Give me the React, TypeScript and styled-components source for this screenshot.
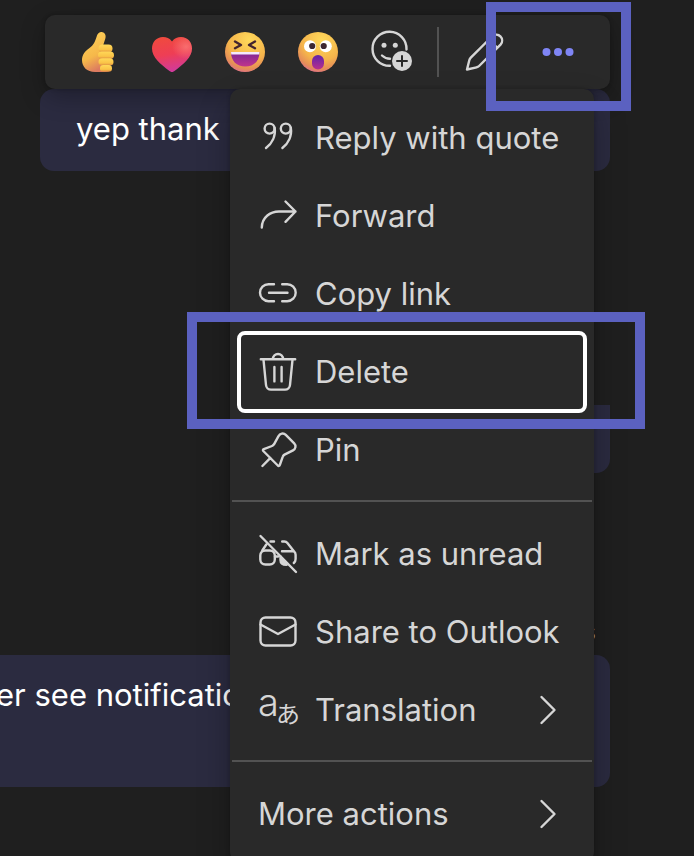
import React from "react";
import styled, { createGlobalStyle } from "styled-components";

const GlobalStyle = createGlobalStyle`
  *, *::before, *::after { box-sizing: border-box; }
  body { margin: 0; background: #1f1f1f; }
  button { font: inherit; color: inherit; background: none; border: 0; padding: 0; cursor: pointer; }
`;

const Stage = styled.div`
  position: relative;
  height: 100vh;
  min-height: 400px;
  overflow: hidden;
  background: #1f1f1f;
  color: #d6d6d6;
  font-family: Inter, "Liberation Sans", sans-serif;
  font-size: 31px;
  line-height: 40px;
`;

const Thread = styled.main`
  display: flex;
  flex-direction: column;
  align-items: stretch;
  padding: 89px 84px 0 0;
`;

const Bubble = styled.article<{ $start: string; $after: number; $height: number; $radius?: string }>`
  margin: 0 0 ${(p) => p.$after}px ${(p) => p.$start};
  min-height: ${(p) => p.$height}px;
  padding: 20px 36px;
  border-radius: ${(p) => p.$radius ?? "14px"};
  background: #2b2b40;
  color: #ffffff;
  white-space: nowrap;
`;

const Status = styled.span`
  align-self: flex-end;
  margin: 0 14px 3px 0;
  font-size: 24px;
  color: #adadad;
`;

const Toolbar = styled.div`
  position: absolute;
  top: 15px;
  right: 84px;
  display: flex;
  align-items: center;
  height: 74px;
  padding: 0 16px 0 17px;
  border-radius: 10px;
  background: #292929;
  box-shadow: 0 0 4px rgba(0, 0, 0, 0.24), 0 8px 24px rgba(0, 0, 0, 0.28);
`;

const ToolButton = styled.button<{ $active?: boolean }>`
  display: grid;
  place-items: center;
  width: 73px;
  height: 74px;
  color: ${(p) => (p.$active ? "#7f85f5" : "#d6d6d6")};
`;

const ToolDivider = styled.span`
  width: 2px;
  height: 50px;
  margin: 0 9px 0 10px;
  background: #525252;
`;

const Menu = styled.div`
  position: absolute;
  top: 89px;
  right: 100px;
  width: 364px;
  padding: 10px 9px 9px;
  border-radius: 10px;
  background: #292929;
  box-shadow: 0 0 4px rgba(0, 0, 0, 0.24), 0 16px 32px rgba(0, 0, 0, 0.28);
`;

const MenuRow = styled.button<{ $focused?: boolean }>`
  display: flex;
  align-items: center;
  gap: 17px;
  width: 100%;
  height: 78px;
  padding: 0 29px 0 19px;
  border-radius: 6px;
  text-align: left;
  white-space: nowrap;
  outline: ${(p) => (p.$focused ? "4px solid #ffffff" : "none")};
  outline-offset: -2px;
`;

const RowLabel = styled.span`
  flex: 1;
`;

const MenuDivider = styled.hr`
  height: 2px;
  margin: 11px -7px 13px;
  border: 0;
  background: #525252;
`;

const Highlight = styled.div<{ $top: number; $right: number; $width: number; $height: number }>`
  position: absolute;
  top: ${(p) => p.$top}px;
  right: ${(p) => p.$right}px;
  width: ${(p) => p.$width}px;
  height: ${(p) => p.$height}px;
  border: 10px solid #5b61c0;
  pointer-events: none;
`;

const LineIcon = styled.svg`
  display: block;
  flex: none;
  fill: none;
  stroke: currentColor;
  stroke-width: 2.4;
  stroke-linecap: round;
  stroke-linejoin: round;
  overflow: visible;
`;

const Emoji = styled.svg`
  display: block;
  width: 40px;
  height: 40px;
`;

const Icon = ({ children }: { children: React.ReactNode }) => (
  <LineIcon width="40" height="40" viewBox="0 0 40 40" aria-hidden="true">
    {children}
  </LineIcon>
);

const Chevron = () => (
  <LineIcon width="16" height="28" viewBox="0 0 16 28" aria-hidden="true">
    <path d="M1.5 1 14.5 14 1.5 27" />
  </LineIcon>
);

const icons = {
  quote: (
    <Icon>
      <circle cx="11.6" cy="10.6" r="5" />
      <path d="M16.6 9.8C18 18 14 25.5 8 30" />
      <circle cx="27.8" cy="10.6" r="5" />
      <path d="M32.8 9.8C34.2 18 30.2 25.5 24.4 30" />
    </Icon>
  ),
  forward: (
    <Icon>
      <path d="M3.8 31.5C4 21.5 12 15.5 21 15.5H37.5M27.5 5.5l10 10-10 10.3" />
    </Icon>
  ),
  link: (
    <Icon>
      <path d="M16 10.2h-5.5a8.5 8.5 0 0 0 0 17H16M24.2 10.2h5a8.5 8.5 0 0 1 0 17h-5M11 18.7h18.5" />
    </Icon>
  ),
  trash: (
    <Icon>
      <path d="M2.8 7.3h34.4M15 7a5 5 0 0 1 10 0M5.5 7.8 8 33a5 5 0 0 0 5 4.6h14a5 5 0 0 0 5-4.6l2.5-25.2M16.4 15v14.4M23.6 15v14.4" />
    </Icon>
  ),
  pin: (
    <Icon>
      <path d="M20.5 6.2C21.8 3.4 25.5 2.6 27.8 4.9l8.4 8.4c2.2 2.2 1.5 5.7-1.2 7.1l-8.5 4.200c-1 .6-1.500 1.200-1.800 2.200L21.800 35c-.3 1-1.300 1.300-2 .5L5.300 21c-.7-.8-.3-1.600.5-1.900L14 16c1-.4 1.500-1 2-1.700ZM12.400 27.800 4.400 36" />
    </Icon>
  ),
  unread: (
    <Icon>
      <rect x="2.3" y="16.5" width="14.500" height="14" rx="5" />
      <path d="M2.500 2l35.500 36M4.300 16.500l4-6M12.500 7.500H16M24.200 7.500h2.200c1.400 0 2.200.5 3 1.500L36.500 18M24 17.200h11.800c1.200.8 1.800 2 1.800 3.500V25c0 1.800-.6 3-1.800 4" />
      <path d="M17 22.500h3M22.500 22.500V26c0 3.200 2.400 4.800 6 4.800" />
      <path d="M23.200 23.500l6.500 6.500c-3.800.4-6-1-6.500-6.500Z" fill="currentColor" />
    </Icon>
  ),
  mail: (
    <Icon>
      <rect x="2.500" y="5.500" width="35" height="28" rx="5" />
      <path d="M2.500 12.500L20 22l17.500-9.500" />
    </Icon>
  ),
  translate: (
    <Icon>
      <g fill="currentColor" stroke="none">
        <text x="0" y="26" fontSize="38" fontWeight="300">a</text>
        <text x="18" y="33" fontSize="24" fontWeight="400" fontFamily="'Noto Sans CJK JP', sans-serif">あ</text>
      </g>
    </Icon>
  ),
};

const ThumbsUp = () => (
  <Emoji viewBox="0 0 40 40" aria-hidden="true">
    <defs>
      <linearGradient id="thumb-skin" x1="0" y1="0" x2="0.4" y2="1">
        <stop offset="0" stopColor="#ffd45a" />
        <stop offset="0.65" stopColor="#f6b84a" />
        <stop offset="1" stopColor="#dc7a60" />
      </linearGradient>
      <linearGradient id="thumb-finger" x1="0" y1="0" x2="0" y2="1">
        <stop offset="0" stopColor="#ffd858" />
        <stop offset="0.65" stopColor="#fac347" />
        <stop offset="1" stopColor="#dc8a43" />
      </linearGradient>
    </defs>
    <path d="M18 3.500c1.200-3.300 4.200-4.200 6.400-3 2.300 1.200 2.600 3.800 1.800 6.400l-2.600 8 3.800 2.500L32 37c-1 2-3 3-6 3H16C8 40 3 35 3 28c0-5 3-9 7.500-12C15 12.800 16.500 8.500 18 3.500Z" fill="url(#thumb-skin)" />
    <rect x="19.500" y="12.500" width="14" height="8" rx="4" fill="url(#thumb-finger)" />
    <rect x="19" y="19.500" width="16" height="7.500" rx="3.700" fill="url(#thumb-finger)" />
    <rect x="19.500" y="26.300" width="15" height="7.300" rx="3.600" fill="url(#thumb-finger)" />
    <rect x="21" y="33" width="12" height="6.700" rx="3.300" fill="url(#thumb-finger)" />
  </Emoji>
);

const Heart = () => (
  <Emoji viewBox="0 0 40 40" aria-hidden="true">
    <defs>
      <linearGradient id="heart-fill" x1="0.3" y1="0" x2="0.5" y2="1">
        <stop offset="0" stopColor="#f04a3e" />
        <stop offset="0.5" stopColor="#ee3e55" />
        <stop offset="1" stopColor="#d03a9f" />
      </linearGradient>
      <radialGradient id="heart-shine" cx="0.85" cy="0.28" r="0.35">
        <stop offset="0" stopColor="#ff8b82" stopOpacity="0.6" />
        <stop offset="1" stopColor="#ff8b82" stopOpacity="0" />
      </radialGradient>
    </defs>
    {["url(#heart-fill)", "url(#heart-shine)"].map((fill) => (
      <path key={fill} d="M20 9.500C17.500 6 14.500 5 11 5 4.500 5 0 10 0 16.500c0 9 8.500 15.500 17.500 22.600 1.700 1.300 3.300 1.300 5 0C31.500 32 40 25.500 40 16.500 40 10 35.500 5 29 5c-3.500 0-6.500 1-9 4.500Z" fill={fill} />
    ))}
  </Emoji>
);

const FaceGradient = ({ id }: { id: string }) => (
  <radialGradient id={id} cx="0.6" cy="0.2" r="0.85">
    <stop offset="0" stopColor="#ffd95a" />
    <stop offset="0.6" stopColor="#f5b44b" />
    <stop offset="0.85" stopColor="#e58d58" />
    <stop offset="1" stopColor="#df6c91" />
  </radialGradient>
);

const Laugh = () => (
  <Emoji viewBox="0 0 40 40" aria-hidden="true">
    <defs>
      <FaceGradient id="laugh-face" />
      <linearGradient id="laugh-mouth" x1="0" y1="0" x2="0" y2="1">
        <stop offset="0" stopColor="#7b2596" />
        <stop offset="1" stopColor="#c0358b" />
      </linearGradient>
    </defs>
    <circle cx="20" cy="20" r="20" fill="url(#laugh-face)" />
    <path d="M10 9.500l6 3.500-6 3.200M30 9.500L24 13l6 3.200" fill="none" stroke="#44242f" strokeWidth="2.400" strokeLinecap="round" strokeLinejoin="round" />
    <path d="M6 20h28.500c0 9-5.500 14.500-14.200 14.500S6 29 6 20Z" fill="url(#laugh-mouth)" />
    <path d="M6 20h28.500l-.3 2.500H6.300Z" fill="#f4e8fb" />
  </Emoji>
);

const Shocked = () => (
  <Emoji viewBox="0 0 40 40" aria-hidden="true">
    <defs>
      <FaceGradient id="shock-face" />
      <linearGradient id="shock-mouth" x1="0" y1="0" x2="0" y2="1">
        <stop offset="0" stopColor="#6224aa" />
        <stop offset="1" stopColor="#b8308c" />
      </linearGradient>
    </defs>
    <circle cx="20" cy="20" r="20" fill="url(#shock-face)" />
    <circle cx="12" cy="14.300" r="6" fill="#ffffff" />
    <circle cx="27.800" cy="14.300" r="6" fill="#ffffff" />
    <circle cx="14.200" cy="14" r="3.100" fill="#3c2631" />
    <circle cx="25.700" cy="14" r="3.100" fill="#3c2631" />
    <rect x="14" y="23" width="12" height="14.500" rx="6" fill="url(#shock-mouth)" />
  </Emoji>
);

const AddReaction = () => (
  <LineIcon width="44" height="44" viewBox="0 0 44 44" aria-hidden="true">
    <path d="M37.500 19.500A17 17 0 1 0 21 35.800M13 25.500Q16.500 28.800 21 28.800" />
    <g fill="currentColor" stroke="none">
      <circle cx="15" cy="15.300" r="2.500" />
      <circle cx="26.300" cy="15.300" r="2.500" />
      <circle cx="33" cy="31" r="10" />
    </g>
    <path d="M28 31h10M33 26v10" stroke="#292929" strokeWidth="2" />
  </LineIcon>
);

const Pencil = () => (
  <LineIcon width="44" height="44" viewBox="0 0 44 44" aria-hidden="true">
    <path d="M4 39.500l2.300-9.200q.4-1.500 1.500-2.600L29.500 6a5.900 5.900 0 0 1 8.300 8.300L16.100 36q-1 1-2.500 1.300ZM26 9.500l8.300 8.300" />
  </LineIcon>
);

const Dots = () => (
  <svg width="32" height="8" viewBox="0 0 32 8" fill="currentColor" aria-hidden="true">
    <circle cx="4.500" cy="4" r="4" />
    <circle cx="16" cy="4" r="4" />
    <circle cx="27.500" cy="4" r="4" />
  </svg>
);

type Entry = { label: string; icon?: keyof typeof icons; submenu?: boolean; focused?: boolean };

const groups: Entry[][] = [
  [
    { label: "Reply with quote", icon: "quote" },
    { label: "Forward", icon: "forward" },
    { label: "Copy link", icon: "link" },
    { label: "Delete", icon: "trash", focused: true },
    { label: "Pin", icon: "pin" },
  ],
  [
    { label: "Mark as unread", icon: "unread" },
    { label: "Share to Outlook", icon: "mail" },
    { label: "Translation", icon: "translate", submenu: true },
  ],
  [{ label: "More actions", submenu: true }],
];

const reactions = [
  { name: "Like", Picture: ThumbsUp },
  { name: "Heart", Picture: Heart },
  { name: "Laugh", Picture: Laugh },
  { name: "Surprised", Picture: Shocked },
  { name: "More reactions", Picture: AddReaction },
];

export default function App() {
  return (
    <Stage>
      <GlobalStyle />
      <Thread>
        <Bubble $start="40px" $after={234} $height={82}>yep thank</Bubble>
        <Bubble $start="50%" $after={139} $height={68} $radius="0 0 14px 14px" />
        <Status>s</Status>
        <Bubble $start="-40px" $after={0} $height={132}>er see notification</Bubble>
      </Thread>

      <Toolbar role="toolbar" aria-label="Message actions">
        {reactions.map(({ name, Picture }) => (
          <ToolButton key={name} type="button" aria-label={name}>
            <Picture />
          </ToolButton>
        ))}
        <ToolDivider />
        <ToolButton type="button" aria-label="Edit">
          <Pencil />
        </ToolButton>
        <ToolButton type="button" aria-label="More options" $active>
          <Dots />
        </ToolButton>
      </Toolbar>

      <Menu role="menu">
        {groups.map((group, index) => (
          <React.Fragment key={index}>
            {index > 0 && <MenuDivider />}
            {group.map((entry) => (
              <MenuRow key={entry.label} type="button" role="menuitem" $focused={entry.focused}>
                {entry.icon && icons[entry.icon]}
                <RowLabel>{entry.label}</RowLabel>
                {entry.submenu && <Chevron />}
              </MenuRow>
            ))}
          </React.Fragment>
        ))}
      </Menu>

      <Highlight $top={2} $right={63} $width={145} $height={109} />
      <Highlight $top={312} $right={49} $width={458} $height={117} />
    </Stage>
  );
}
